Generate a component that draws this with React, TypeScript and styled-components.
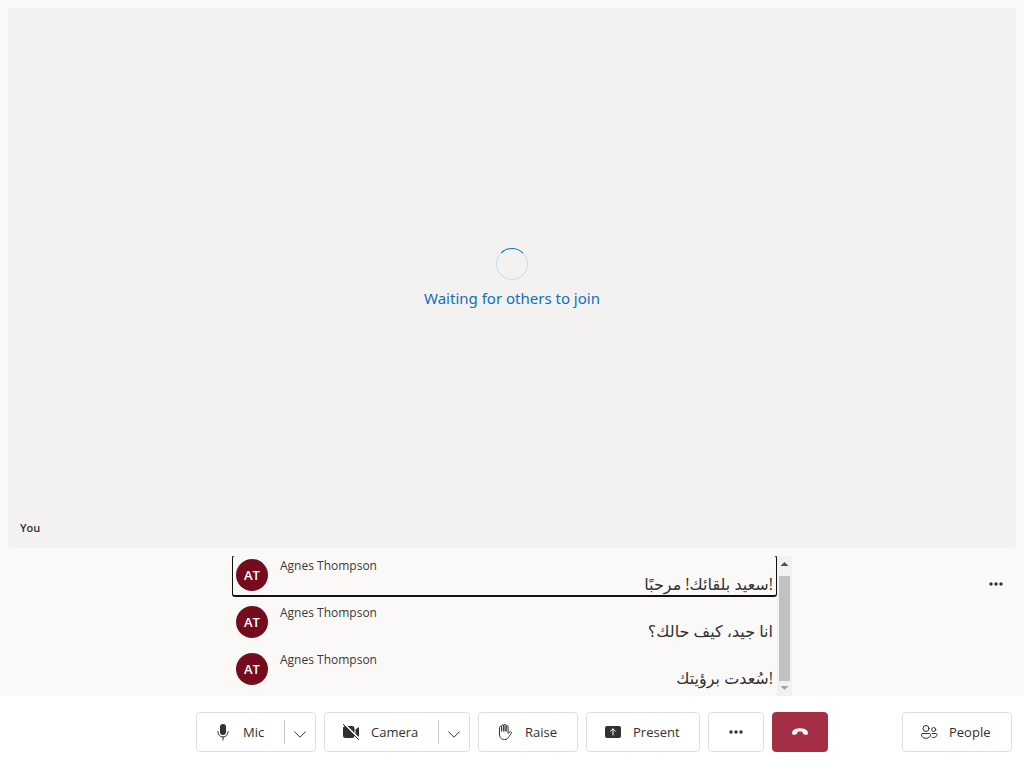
import React from "react";
import styled, { createGlobalStyle, css } from "styled-components";

const GlobalStyle = createGlobalStyle`
  *, *::before, *::after { box-sizing: border-box; }
  body {
    margin: 0;
    color: #323130;
    background: #faf9f8;
    font-family: "Open Sans", "Noto Sans", "DejaVu Sans", sans-serif;
  }
  button { font: inherit; color: inherit; cursor: pointer; }
`;

const Page = styled.div`
  min-height: 100vh;
  display: flex;
  flex-direction: column;
`;

const Stage = styled.main`
  flex: 1;
  display: flex;
  padding: 8px;
`;

const VideoTile = styled.section`
  flex: 1;
  display: grid;
  grid-template-rows: 1fr auto 1fr;
  border-radius: 4px;
  background: #f3f2f1;
`;

const Waiting = styled.div`
  grid-row: 2;
  display: flex;
  flex-direction: column;
  align-items: center;
  gap: 8px;
  color: #106ebe;
  font-family: "Noto Sans", sans-serif;
  font-size: 15px;
  line-height: 20px;
`;

const Spinner = styled.div`
  width: 32px;
  height: 32px;
  border: 1px solid #c7e0f4;
  border-top-color: #0078d4;
  border-radius: 50%;
`;

const TileName = styled.div`
  grid-row: 3;
  align-self: end;
  padding: 12px;
  font-size: 11px;
  font-weight: 600;
  line-height: 16px;
`;

const CaptionsBand = styled.section`
  display: grid;
  grid-template-columns: 1fr minmax(0, 560px) 1fr;
  height: 140px;
`;

const CaptionsPane = styled.div`
  grid-column: 2;
  display: flex;
  overflow: hidden;
`;

const CaptionList = styled.ul`
  flex: 1;
  display: flex;
  flex-direction: column;
  gap: 5px;
  margin: -1px 0 0;
  padding: 0;
  list-style: none;
`;

const CaptionRow = styled.li<{ $focused?: boolean }>`
  display: flex;
  flex: none;
  gap: 12px;
  height: 42px;
  padding: 3px;
  border: 1px solid transparent;
  border-bottom-width: 2px;
  border-radius: 3px;
  ${(p) => p.$focused && css`border-color: #111;`}
`;

const Avatar = styled.div`
  display: grid;
  place-items: center;
  width: 32px;
  height: 32px;
  border-radius: 50%;
  color: #fff;
  background: #750b1c;
  font-size: 13px;
  font-weight: 600;
`;

const CaptionBody = styled.div`
  flex: 1;
`;

const Speaker = styled.div`
  color: #3b3a39;
  font-size: 12px;
  line-height: 14px;
`;

const CaptionText = styled.div`
  font-family: "Open Sans", "DejaVu Sans", sans-serif;
  font-size: 16px;
  line-height: 22px;
  text-align: right;
`;

const ScrollBar = styled.div`
  flex: none;
  display: flex;
  flex-direction: column;
  width: 15px;
  padding: 5px 2px;
  background: #f1f1f1;
`;

const ScrollArrow = styled.svg`
  display: block;
  width: 11px;
  height: 5px;
`;

const ScrollThumb = styled.div`
  flex: 1;
  margin: 10px 0 5px;
  background: #c1c1c1;
`;

const MoreButton = styled.button`
  justify-self: end;
  align-self: start;
  display: grid;
  place-items: center;
  width: 32px;
  height: 32px;
  margin: 12px;
  padding: 0;
  border: 0;
  background: transparent;
`;

const ControlBar = styled.footer`
  display: grid;
  grid-template-columns: 1fr auto 1fr;
  padding: 16px 12px;
  background: #fff;
`;

const Controls = styled.div`
  grid-column: 2;
  display: flex;
  gap: 8px;
`;

const frame = css`
  height: 40px;
  border: 1px solid #e1dfdd;
  border-radius: 4px;
  background: #fff;
`;

const BarButton = styled.button<{ $width: number; $end?: boolean }>`
  ${frame}
  display: flex;
  align-items: center;
  gap: 10px;
  width: ${(p) => p.$width}px;
  padding: 0 0 0 16px;
  font-size: 13px;
  line-height: 20px;
  ${(p) => p.$end && css`justify-self: end;`}
`;

const IconButton = styled.button<{ $danger?: boolean }>`
  ${frame}
  display: grid;
  place-items: center;
  width: 56px;
  padding: 0;
  ${(p) => p.$danger && css`
    color: #fff;
    border-color: #a42e43;
    background: #a42e43;
  `}
`;

const SplitGroup = styled.div<{ $width: number }>`
  ${frame}
  display: flex;
  align-items: center;
  width: ${(p) => p.$width}px;
`;

const SplitMain = styled.button`
  flex: 1;
  display: flex;
  align-items: center;
  gap: 10px;
  height: 38px;
  padding: 0 0 0 16px;
  border: 0;
  background: transparent;
  font-size: 13px;
  line-height: 20px;
`;

const SplitMenu = styled.button`
  display: grid;
  place-items: center;
  width: 31px;
  height: 24px;
  padding: 4px 0 0;
  border: 0;
  border-left: 1px solid #c8c6c4;
  background: transparent;
`;

const Glyph = styled.svg`
  display: block;
  flex: none;
  width: 20px;
  height: 20px;
`;

const MicIcon = () => (
  <Glyph viewBox="0 0 20 20" fill="currentColor" aria-hidden="true">
    <rect x="7" y="2" width="6" height="11" rx="3" />
    <path d="M5 9.5V10a5 5 0 0 0 10 0v-.5M10 15v3" fill="none" stroke="currentColor" strokeLinecap="round" />
  </Glyph>
);

const CameraOffIcon = () => (
  <Glyph viewBox="0 0 20 20" aria-hidden="true">
    <path d="M4.5 4H11a2.5 2.5 0 0 1 2.5 2.5v7A2.5 2.5 0 0 1 11 16H4.5A2.5 2.5 0 0 1 2 13.5v-7A2.5 2.5 0 0 1 4.5 4ZM14.5 7.4l2.700-2a.5.5 0 0 1 .8.4v8.4a.5.5 0 0 1-.8.4l-2.700-2Z" fill="currentColor" />
    <path d="M3.2 1.8 18.800 17.400" stroke="#fff" strokeWidth="1.5" />
    <path d="M2.300 2.300 17.700 17.700" stroke="currentColor" strokeLinecap="round" />
  </Glyph>
);

const HandIcon = () => (
  <Glyph viewBox="0 0 20 20" fill="none" stroke="currentColor" strokeLinecap="round" strokeLinejoin="round" aria-hidden="true">
    <path d="M4.500 12V5.500a1.050 1.050 0 0 1 2.100 0V9M6.600 9V3.900a1.100 1.100 0 0 1 2.200 0V9M8.800 9V3.500a1.100 1.100 0 0 1 2.200 0V9M11 9V4.700a1.050 1.050 0 0 1 2.100 0V11.500l1.200-1.200c.7-.6 1.700-.6 2.100 0 .3.400.2.700-.1 1.100l-2.200 3C13 16.400 11.900 17.500 9.400 17.500 6.200 17.500 4.500 15.600 4.500 12" />
  </Glyph>
);

const PresentIcon = () => (
  <Glyph viewBox="0 0 20 20" aria-hidden="true">
    <rect x="2" y="4" width="16" height="12" rx="2" fill="currentColor" />
    <path d="M10 13V7M7.500 9.300 10 6.800l2.500 2.500" fill="none" stroke="#fff" strokeLinecap="round" strokeLinejoin="round" />
  </Glyph>
);

const DotsIcon = () => (
  <Glyph viewBox="0 0 20 20" fill="currentColor" aria-hidden="true">
    <circle cx="5" cy="10" r="1.700" />
    <circle cx="10" cy="10" r="1.700" />
    <circle cx="15" cy="10" r="1.700" />
  </Glyph>
);

const HangUpIcon = () => (
  <Glyph viewBox="0 0 20 20" fill="currentColor" aria-hidden="true">
    <path d="M10 6.300c3.200 0 5.600.8 6.900 2.100.9.900 1.200 2.100.9 3.300-.2.900-1 1.300-1.800 1.100l-1.800-.4c-.7-.1-1.200-.6-1.300-1.200l-.3-1.300c-1.700-.6-3.500-.6-5.200 0l-.3 1.300c-.1.600-.6 1.100-1.300 1.200L4 12.800c-.8.200-1.600-.2-1.800-1.100-.3-1.200 0-2.400.9-3.300C4.400 7.100 6.800 6.300 10 6.300Z" />
  </Glyph>
);

const PeopleIcon = () => (
  <Glyph viewBox="0 0 20 20" fill="none" stroke="currentColor" strokeLinecap="round" aria-hidden="true">
    <circle cx="7" cy="6.500" r="3" />
    <circle cx="14.700" cy="7.500" r="2" />
    <path d="M3.500 11.500h7a1 1 0 0 1 1 1c0 2.400-1.900 3.800-4.500 3.800s-4.500-1.400-4.500-3.800a1 1 0 0 1 1-1ZM13.200 11.500h3.800a1 1 0 0 1 1 1c0 1.900-1.600 3-3.700 3-.5 0-1-.1-1.400-.2" />
  </Glyph>
);

const ChevronIcon = () => (
  <svg width="12" height="7" viewBox="0 0 12 7" fill="none" stroke="currentColor" aria-hidden="true">
    <path d="m.4.600 5.600 5.600L11.600.600" />
  </svg>
);

const captions = ["سعيد بلقائك! مرحبًا!", "انا جيد، كيف حالك؟", "سُعدت برؤيتك!"];

// Sentence-final "!" falls on the right because the text sits in a left-to-right block;
// the Arabic question mark is a right-to-left character and stays on the left.
export default function App() {
  return (
    <Page>
      <GlobalStyle />
      <Stage>
        <VideoTile>
          <Waiting role="status">
            <Spinner />
            <span>Waiting for others to join</span>
          </Waiting>
          <TileName>You</TileName>
        </VideoTile>
      </Stage>

      <CaptionsBand aria-label="Captions">
        <CaptionsPane>
          <CaptionList>
            {captions.map((text, i) => (
              <CaptionRow key={text} $focused={i === 0}>
                <Avatar aria-hidden="true">AT</Avatar>
                <CaptionBody>
                  <Speaker>Agnes Thompson</Speaker>
                  <CaptionText lang="ar">{text}</CaptionText>
                </CaptionBody>
              </CaptionRow>
            ))}
          </CaptionList>
          <ScrollBar aria-hidden="true">
            <ScrollArrow viewBox="0 0 11 5"><path d="M1.500 5 5.500 1 9.500 5Z" fill="#505050" /></ScrollArrow>
            <ScrollThumb />
            <ScrollArrow viewBox="0 0 11 5"><path d="M1.500 0 5.500 4 9.500 0Z" fill="#a3a3a3" /></ScrollArrow>
          </ScrollBar>
        </CaptionsPane>
        <MoreButton aria-label="Caption options"><DotsIcon /></MoreButton>
      </CaptionsBand>

      <ControlBar>
        <Controls>
          <SplitGroup $width={120}>
            <SplitMain><MicIcon />Mic</SplitMain>
            <SplitMenu aria-label="Microphone options"><ChevronIcon /></SplitMenu>
          </SplitGroup>
          <SplitGroup $width={146}>
            <SplitMain><CameraOffIcon />Camera</SplitMain>
            <SplitMenu aria-label="Camera options"><ChevronIcon /></SplitMenu>
          </SplitGroup>
          <BarButton $width={100}><HandIcon />Raise</BarButton>
          <BarButton $width={114}><PresentIcon />Present</BarButton>
          <IconButton aria-label="More"><DotsIcon /></IconButton>
          <IconButton $danger aria-label="Leave"><HangUpIcon /></IconButton>
        </Controls>
        <BarButton $width={110} $end><PeopleIcon />People</BarButton>
      </ControlBar>
    </Page>
  );
}
